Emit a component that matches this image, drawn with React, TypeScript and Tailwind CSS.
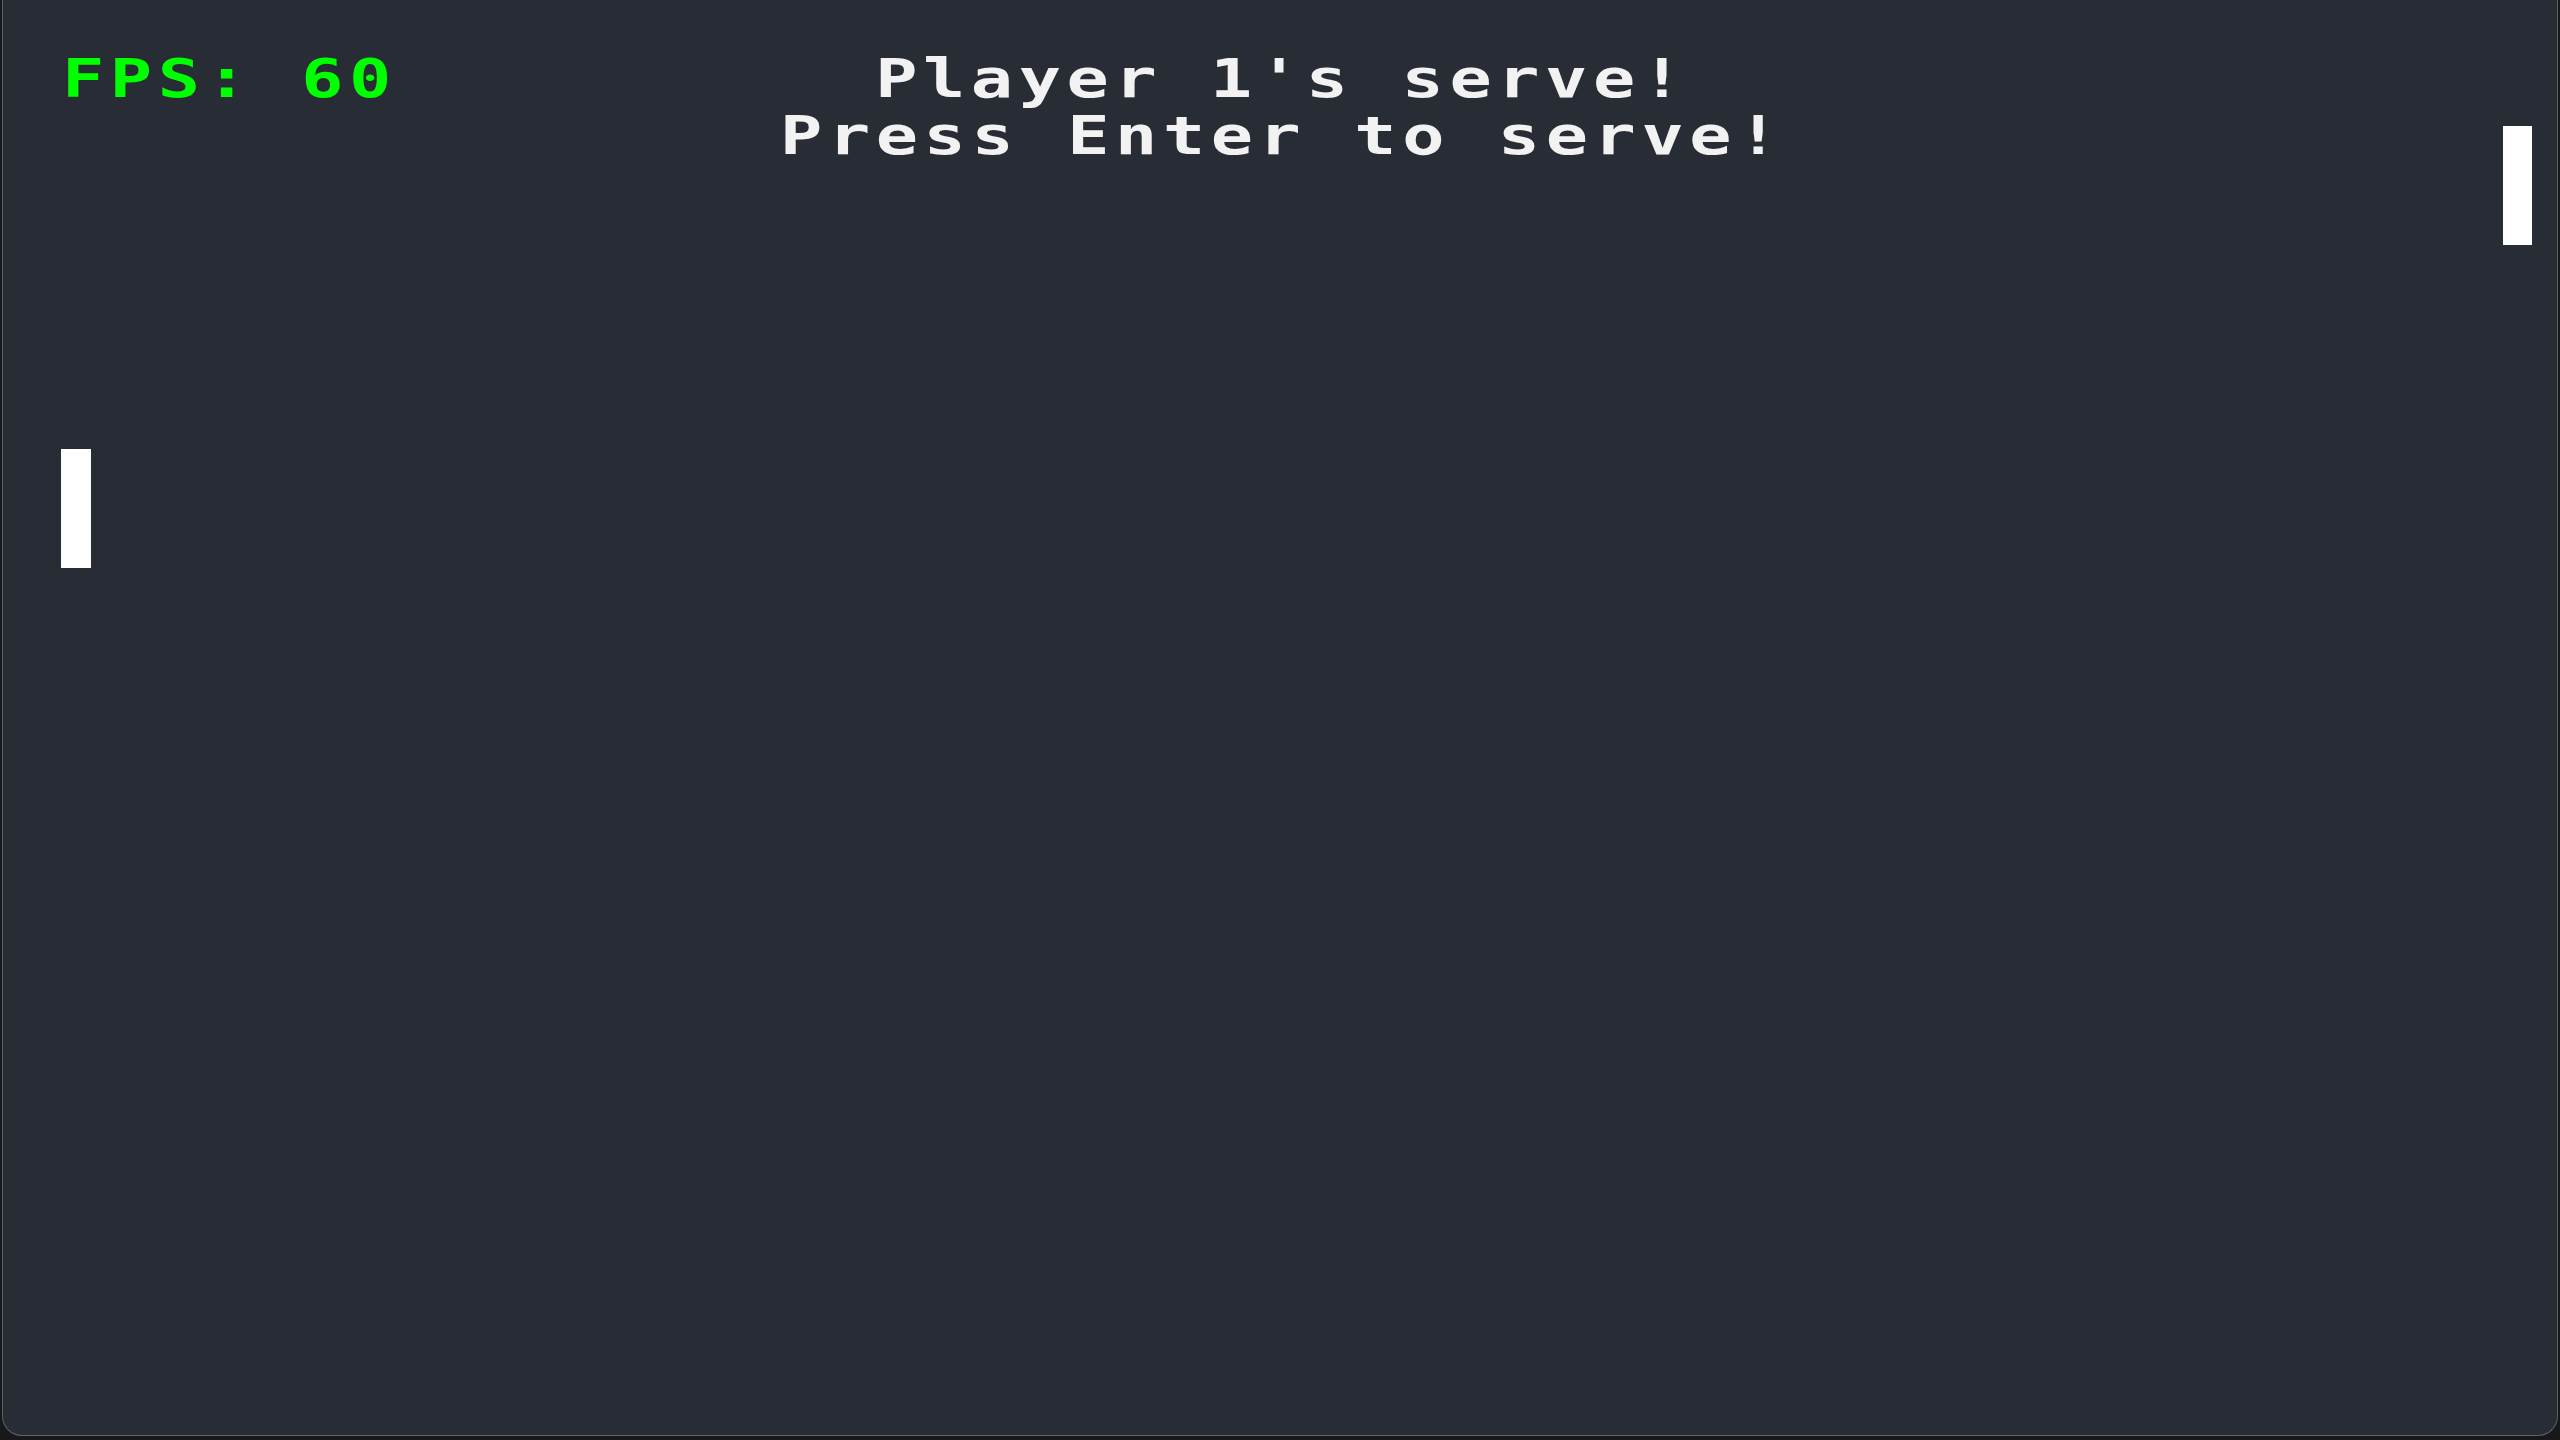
export default function App() {
  const pixelFont = {
    fontFamily: '"DejaVu Sans Mono", "Liberation Mono", monospace',
  };

  return (
    <main className="h-screen w-full bg-[#18181a] px-[2px] pb-[4px]">
      <div
        className="relative h-full w-full rounded-b-[20px] border-x border-b border-[#5f6269] bg-[#282c34] overflow-hidden"
        style={pixelFont}
      >
        {/* FPS counter */}
        <div className="absolute left-[59px] top-[50px] origin-left scale-x-[1.3] text-[54px] leading-[57px] font-bold tracking-[4.3px] text-[#00ff00]">
          FPS: 60
        </div>

        {/* Serve message */}
        <div className="flex flex-col items-center pt-[50px] text-[54px] leading-[57px] font-bold tracking-[4.3px] text-[#f2f2f2] whitespace-pre">
          <span className="mr-[-4.3px] scale-x-[1.3]">Player 1's serve!</span>
          <span className="mr-[-4.3px] scale-x-[1.3]">Press Enter to serve!</span>
        </div>

        {/* Paddles */}
        <div className="absolute left-[58px] top-[449px] h-[119px] w-[30px] bg-white" />
        <div className="absolute left-[2500px] top-[126px] h-[119px] w-[29px] bg-white" />
      </div>
    </main>
  );
}
